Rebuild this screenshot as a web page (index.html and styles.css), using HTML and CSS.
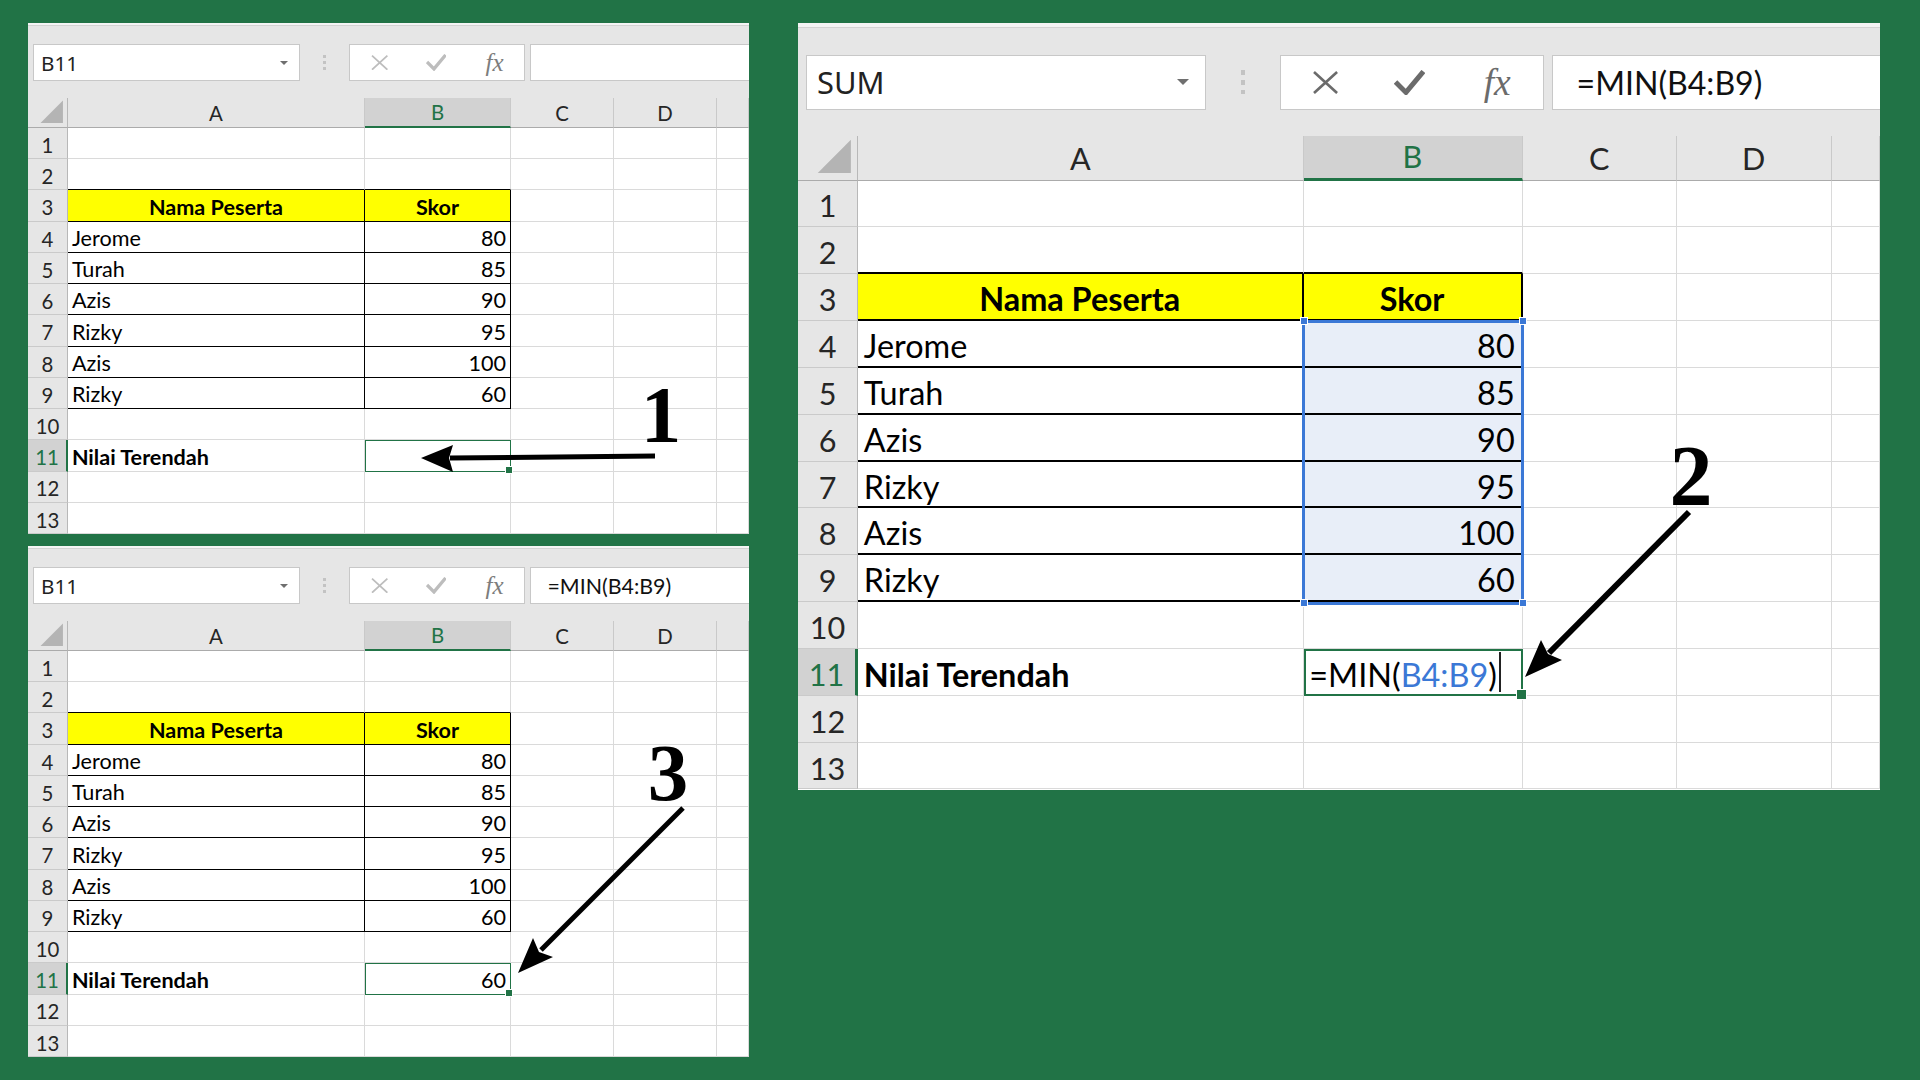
FILE: index.html
```html
<!DOCTYPE html>
<html lang="id">
<head>
<meta charset="utf-8">
<title>Fungsi MIN Excel</title>
<link rel="stylesheet" href="styles.css">
</head>
<body>
<main class="stage">
  <div class="col">
    <!-- Panel 1 -->
    <section class="panel small">
      <div class="toolbar">
        <div class="namebox"><span class="nb-text">B11</span><i class="caret"></i></div>
        <div class="dots"><i></i><i></i><i></i></div>
        <div class="fxbox off">
          <span class="slot"><svg class="ico-x" viewBox="0 0 29 23"><path d="M3 1 L26 22 M26 1 L3 22"/></svg></span>
          <span class="slot"><svg class="ico-ok" viewBox="0 0 31 25"><path d="M1.5 12 L12 22.5 L29.5 1.5"/></svg></span>
          <span class="slot"><span class="fx">fx</span></span>
        </div>
        <div class="formula"></div>
      </div>
      <div class="sheet">
        <div class="hd corner"><i></i></div><div class="hd">A</div><div class="hd on">B</div><div class="hd">C</div><div class="hd">D</div><div class="hd"></div>
        <div class="rh">1</div><div class="c"></div><div class="c"></div><div class="c"></div><div class="c"></div><div class="c"></div>
        <div class="rh">2</div><div class="c above"></div><div class="c above"></div><div class="c"></div><div class="c"></div><div class="c"></div>
        <div class="rh">3</div><div class="c th">Nama Peserta</div><div class="c th">Skor</div><div class="c"></div><div class="c"></div><div class="c"></div>
        <div class="rh">4</div><div class="c tb">Jerome</div><div class="c tb num">80</div><div class="c"></div><div class="c"></div><div class="c"></div>
        <div class="rh">5</div><div class="c tb">Turah</div><div class="c tb num">85</div><div class="c"></div><div class="c"></div><div class="c"></div>
        <div class="rh">6</div><div class="c tb">Azis</div><div class="c tb num">90</div><div class="c"></div><div class="c"></div><div class="c"></div>
        <div class="rh">7</div><div class="c tb">Rizky</div><div class="c tb num">95</div><div class="c"></div><div class="c"></div><div class="c"></div>
        <div class="rh">8</div><div class="c tb">Azis</div><div class="c tb num">100</div><div class="c"></div><div class="c"></div><div class="c"></div>
        <div class="rh">9</div><div class="c tb">Rizky</div><div class="c tb num">60</div><div class="c"></div><div class="c"></div><div class="c"></div>
        <div class="rh">10</div><div class="c"></div><div class="c"></div><div class="c"></div><div class="c"></div><div class="c"></div>
        <div class="rh on">11</div><div class="c b">Nilai Terendah</div><div class="c act"></div><div class="c"></div><div class="c"></div><div class="c"></div>
        <div class="rh">12</div><div class="c"></div><div class="c"></div><div class="c"></div><div class="c"></div><div class="c"></div>
        <div class="rh">13</div><div class="c"></div><div class="c"></div><div class="c"></div><div class="c"></div><div class="c"></div>
      </div>
      <svg class="arrows" viewBox="0 0 721 511">
        <path class="shaft" d="M627 433 L422 435"/>
        <path class="head" d="M393 435 L425 422 L421 435 L425 449 Z"/>
        <text class="step" x="633" y="419">1</text>
      </svg>
    </section>

    <!-- Panel 3 -->
    <section class="panel small">
      <div class="toolbar">
        <div class="namebox"><span class="nb-text">B11</span><i class="caret"></i></div>
        <div class="dots"><i></i><i></i><i></i></div>
        <div class="fxbox off">
          <span class="slot"><svg class="ico-x" viewBox="0 0 29 23"><path d="M3 1 L26 22 M26 1 L3 22"/></svg></span>
          <span class="slot"><svg class="ico-ok" viewBox="0 0 31 25"><path d="M1.5 12 L12 22.5 L29.5 1.5"/></svg></span>
          <span class="slot"><span class="fx">fx</span></span>
        </div>
        <div class="formula"><span class="f-text">=MIN(B4:B9)</span></div>
      </div>
      <div class="sheet">
        <div class="hd corner"><i></i></div><div class="hd">A</div><div class="hd on">B</div><div class="hd">C</div><div class="hd">D</div><div class="hd"></div>
        <div class="rh">1</div><div class="c"></div><div class="c"></div><div class="c"></div><div class="c"></div><div class="c"></div>
        <div class="rh">2</div><div class="c above"></div><div class="c above"></div><div class="c"></div><div class="c"></div><div class="c"></div>
        <div class="rh">3</div><div class="c th">Nama Peserta</div><div class="c th">Skor</div><div class="c"></div><div class="c"></div><div class="c"></div>
        <div class="rh">4</div><div class="c tb">Jerome</div><div class="c tb num">80</div><div class="c"></div><div class="c"></div><div class="c"></div>
        <div class="rh">5</div><div class="c tb">Turah</div><div class="c tb num">85</div><div class="c"></div><div class="c"></div><div class="c"></div>
        <div class="rh">6</div><div class="c tb">Azis</div><div class="c tb num">90</div><div class="c"></div><div class="c"></div><div class="c"></div>
        <div class="rh">7</div><div class="c tb">Rizky</div><div class="c tb num">95</div><div class="c"></div><div class="c"></div><div class="c"></div>
        <div class="rh">8</div><div class="c tb">Azis</div><div class="c tb num">100</div><div class="c"></div><div class="c"></div><div class="c"></div>
        <div class="rh">9</div><div class="c tb">Rizky</div><div class="c tb num">60</div><div class="c"></div><div class="c"></div><div class="c"></div>
        <div class="rh">10</div><div class="c"></div><div class="c"></div><div class="c"></div><div class="c"></div><div class="c"></div>
        <div class="rh on">11</div><div class="c b">Nilai Terendah</div><div class="c act num">60</div><div class="c"></div><div class="c"></div><div class="c"></div>
        <div class="rh">12</div><div class="c"></div><div class="c"></div><div class="c"></div><div class="c"></div><div class="c"></div>
        <div class="rh">13</div><div class="c"></div><div class="c"></div><div class="c"></div><div class="c"></div><div class="c"></div>
      </div>
      <svg class="arrows" viewBox="0 0 721 511">
        <path class="shaft" d="M655 262 L513 404"/>
        <path class="head" d="M490 427 L505 392 L511 406 L525 411 Z"/>
        <text class="step" x="640" y="254">3</text>
      </svg>
    </section>
  </div>

  <!-- Panel 2 -->
  <section class="panel large">
    <div class="toolbar">
      <div class="namebox"><span class="nb-text">SUM</span><i class="caret"></i></div>
      <div class="dots"><i></i><i></i><i></i></div>
      <div class="fxbox">
        <span class="slot"><svg class="ico-x" viewBox="0 0 29 23"><path d="M3 1 L26 22 M26 1 L3 22"/></svg></span>
        <span class="slot"><svg class="ico-ok" viewBox="0 0 31 25"><path d="M1.5 12 L12 22.5 L29.5 1.5"/></svg></span>
        <span class="slot"><span class="fx">fx</span></span>
      </div>
      <div class="formula"><span class="f-text">=MIN(B4:B9)</span></div>
    </div>
    <div class="sheet">
      <div class="hd corner"><i></i></div><div class="hd">A</div><div class="hd on">B</div><div class="hd">C</div><div class="hd">D</div><div class="hd"></div>
      <div class="rh">1</div><div class="c"></div><div class="c"></div><div class="c"></div><div class="c"></div><div class="c"></div>
      <div class="rh">2</div><div class="c above"></div><div class="c above"></div><div class="c"></div><div class="c"></div><div class="c"></div>
      <div class="rh">3</div><div class="c th">Nama Peserta</div><div class="c th">Skor</div><div class="c"></div><div class="c"></div><div class="c"></div>
      <div class="rh">4</div><div class="c tb">Jerome</div><div class="c tb num sel">80</div><div class="c"></div><div class="c"></div><div class="c"></div>
      <div class="rh">5</div><div class="c tb">Turah</div><div class="c tb num sel">85</div><div class="c"></div><div class="c"></div><div class="c"></div>
      <div class="rh">6</div><div class="c tb">Azis</div><div class="c tb num sel">90</div><div class="c"></div><div class="c"></div><div class="c"></div>
      <div class="rh">7</div><div class="c tb">Rizky</div><div class="c tb num sel">95</div><div class="c"></div><div class="c"></div><div class="c"></div>
      <div class="rh">8</div><div class="c tb">Azis</div><div class="c tb num sel">100</div><div class="c"></div><div class="c"></div><div class="c"></div>
      <div class="rh">9</div><div class="c tb">Rizky</div><div class="c tb num sel">60</div><div class="c"></div><div class="c"></div><div class="c"></div>
      <div class="rh">10</div><div class="c"></div><div class="c"></div><div class="c"></div><div class="c"></div><div class="c"></div>
      <div class="rh on">11</div><div class="c b">Nilai Terendah</div><div class="c act">=MIN(<span class="ref">B4:B9</span>)<i class="cursor"></i></div><div class="c"></div><div class="c"></div><div class="c"></div>
      <div class="rh">12</div><div class="c"></div><div class="c"></div><div class="c"></div><div class="c"></div><div class="c"></div>
      <div class="rh">13</div><div class="c"></div><div class="c"></div><div class="c"></div><div class="c"></div><div class="c"></div>
      <span class="range"><i class="h tl"></i><i class="h tr"></i><i class="h bl"></i><i class="h br"></i></span>
    </div>
    <svg class="arrows" viewBox="0 0 1081.5 766.5">
      <path class="shaft big" d="M891 489 L751 630"/>
      <path class="head" d="M727 654 L743 617 L750 631 L764 637 Z"/>
      <text class="step big" x="893" y="482">2</text>
    </svg>
  </section>
</main>
</body>
</html>
```

FILE: styles.css
```css
* { box-sizing: border-box; }

html, body {
  margin: 0;
  padding: 0;
}

body {
  width: 1920px;
  height: 1080px;
  overflow: hidden;
  background: #217346;
  font-family: Lato, "Liberation Sans", Arial, sans-serif;
}

.stage {
  display: flex;
  align-items: flex-start;
  gap: 49px;
  padding: 23px 0 0 28px;
}

.col {
  display: flex;
  flex-direction: column;
  gap: 12px;
}

/* a screenshot panel; every size is in em so the big one is the small one x1.5 */
.panel {
  position: relative;
  width: 36.05em;
  height: 25.55em;
  display: flex;
  flex-direction: column;
  overflow: hidden;
  background: #e6e6e6;
  color: #000;
}

.small { font-size: 20px; }
.large { font-size: 30px; }

/* formula bar */
.toolbar {
  flex: none;
  height: 3.75em;
  display: flex;
  align-items: flex-start;
  padding: 1.05em 0 0 .25em;
  background: linear-gradient(#f4f4f4 0 .12em, #d3d3d3 .12em .17em, #e6e6e6 .17em);
}

.namebox {
  flex: none;
  width: 13.35em;
  height: 1.85em;
  display: flex;
  align-items: center;
  justify-content: space-between;
  padding: 0 .55em 0 .35em;
  background: #fff;
  border: .05em solid #c8c8c8;
}

.nb-text {
  font-family: "Noto Sans", "Open Sans", sans-serif;
  font-size: 1.03em;
  color: #222;
}

.caret {
  width: 0;
  height: 0;
  border-left: .2em solid transparent;
  border-right: .2em solid transparent;
  border-top: .22em solid #6f6f6f;
}

.dots {
  flex: none;
  width: 2.45em;
  height: 1.85em;
  display: flex;
  flex-direction: column;
  align-items: center;
  justify-content: center;
  gap: .17em;
}

.dots i {
  width: .15em;
  height: .15em;
  background: #c3c3c3;
}

.fxbox {
  flex: none;
  width: 8.8em;
  height: 1.85em;
  display: flex;
  align-items: center;
  padding-left: .1em;
  background: #fff;
  border: .05em solid #c8c8c8;
}

.slot {
  width: 2.8em;
  display: flex;
  justify-content: center;
  align-items: center;
}

.ico-x {
  width: .97em;
  height: .77em;
  fill: none;
  stroke: #6b6b6b;
  stroke-width: 2.6;
}

.ico-ok {
  width: 1.03em;
  height: .83em;
  fill: none;
  stroke: #6b6b6b;
  stroke-width: 5;
}

.off .ico-x, .off .ico-ok { stroke: #bdbdbd; }

.fx {
  font-family: "Liberation Serif", "Times New Roman", serif;
  font-style: italic;
  font-size: 1.25em;
  line-height: 1;
  color: #6b6b6b;
  margin-left: .2em;
}

.off .fx { color: #7d7d7d; }

.formula {
  flex: 1;
  height: 1.85em;
  margin-left: .27em;
  display: flex;
  align-items: center;
  padding-left: .8em;
  background: #fff;
  border: .05em solid #c8c8c8;
  border-right: 0;
}

.f-text {
  font-size: 1.07em;
  color: #111;
}

/* grid */
.sheet {
  position: relative;
  flex: 1;
  display: grid;
  grid-template-columns: 2em 14.85em 7.3em 5.15em 5.15em 1fr;
  grid-template-rows: 1.5em repeat(13, 1fr);
  background: #fff;
}

.hd, .rh, .c {
  display: flex;
  align-items: flex-end;
  line-height: 1.2;
  white-space: nowrap;
  overflow: hidden;
  border-right: .06em solid #dadada;
  border-bottom: .06em solid #dadada;
}

.c {
  font-size: 1.08em;
  padding: 0 .18em 0;
  background: #fff;
}

.hd {
  justify-content: center;
  padding-bottom: .06em;
  font-size: 1.02em;
  color: #262626;
  background: #e6e6e6;
  border-right-color: #c9c9c9;
  border-bottom-color: #ababab;
}

.hd.on {
  color: #217346;
  background: #d2d2d2;
  border-bottom: .1em solid #217346;
}

.corner {
  justify-content: flex-end;
  padding: 0 .2em .2em 0;
  border-right-color: #b8b8b8;
}

.corner i {
  width: 1.1em;
  height: 1.1em;
  background: #b4b4b4;
  clip-path: polygon(100% 0, 100% 100%, 0 100%);
}

.rh {
  justify-content: center;
  padding-bottom: .04em;
  font-size: 1.02em;
  color: #262626;
  background: #e6e6e6;
  border-right-color: #b8b8b8;
  border-bottom-color: #cacaca;
}

.rh.on {
  color: #217346;
  background: #d2d2d2;
  border-right: .1em solid #217346;
}

.th {
  justify-content: center;
  font-weight: 700;
  background: #ffff00;
  border-right: .08em solid #000;
  border-bottom: .08em solid #000;
}

.tb {
  border-right: .08em solid #000;
  border-bottom: .08em solid #000;
}

.above { border-bottom: .08em solid #000; }

.num { justify-content: flex-end; }

.b { font-weight: 700; }

.sel { background: #e8eef8; }

.act {
  position: relative;
  z-index: 2;
  overflow: visible;
  outline: .09em solid #217346;
  outline-offset: -.07em;
}

.act::after {
  content: "";
  position: absolute;
  right: -.16em;
  bottom: -.16em;
  width: .28em;
  height: .28em;
  background: #217346;
  border: .05em solid #fff;
}

.ref { color: #3b78d6; }

.cursor {
  align-self: stretch;
  width: .06em;
  margin: .1em 0 .08em .06em;
  background: #222;
}

/* highlighted range B4:B9 while editing the formula */
.range {
  position: absolute;
  grid-column: 3 / 4;
  grid-row: 5 / 11;
  top: -.05em;
  left: -.05em;
  right: -.06em;
  bottom: -.08em;
  z-index: 3;
  border: .1em solid #3b78d6;
}

.h {
  position: absolute;
  width: .27em;
  height: .27em;
  background: #3b78d6;
  border: .04em solid #fff;
}

.tl { top: -.18em; left: -.18em; }
.tr { top: -.18em; right: -.18em; }
.bl { bottom: -.18em; left: -.18em; }
.br { bottom: -.18em; right: -.18em; }

/* callout arrows and step numbers */
.arrows {
  position: absolute;
  top: 0;
  left: 0;
  width: 100%;
  height: 100%;
  z-index: 5;
  pointer-events: none;
}

.shaft {
  fill: none;
  stroke: #000;
  stroke-width: 5;
}

.shaft.big { stroke-width: 6; }

.head { fill: #000; }

.step {
  font-family: "Liberation Serif", "Times New Roman", serif;
  font-weight: 700;
  font-size: 81px;
  text-anchor: middle;
  fill: #000;
}

.step.big { font-size: 86px; }
```
